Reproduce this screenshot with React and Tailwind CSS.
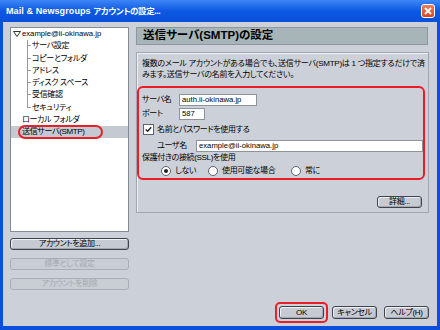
import React from "react";

const treeItems = [
  { label: "サーバ設定" },
  { label: "コピーとフォルダ" },
  { label: "アドレス" },
  { label: "ディスク スペース" },
  { label: "受信確認" },
  { label: "セキュリティ", last: true },
];

function TreeLine({ last }) {
  return (
    <div className="ml-[16px] w-[4px] h-full flex flex-col">
      <div className="h-1/2 border-l border-b border-[#9a9a9a]" />
      <div className={last ? "h-1/2" : "h-1/2 border-l border-[#9a9a9a]"} />
    </div>
  );
}

function Btn({ children, disabled, className = "" }) {
  return (
    <div
      className={
        "h-[12px] flex items-center justify-center rounded-[3px] border leading-none " +
        (disabled
          ? "border-[#a9adb5] text-[#a4a8b0] bg-[#c9cdd4] "
          : "border-[#3f434b] text-black bg-[#c6cad2] shadow-[inset_1px_1px_0_#eef0f3,inset_-1px_-1px_0_#a3a7af] ") +
        className
      }
    >
      {children}
    </div>
  );
}

function Input({ value, className = "" }) {
  return (
    <div
      className={
        "h-[12px] bg-white border border-[#8e939b] flex items-center pl-[2px] text-[7.7px] leading-none tracking-normal " +
        className
      }
    >
      {value}
    </div>
  );
}

function Radio({ checked, label }) {
  return (
    <div className="flex items-center gap-[4px]">
      <div className="w-[10px] h-[10px] shrink-0 rounded-full bg-white border border-[#5e636b] flex items-center justify-center">
        {checked && <div className="w-[4px] h-[4px] rounded-full bg-[#222]" />}
      </div>
      <span>{label}</span>
    </div>
  );
}

export default function App() {
  return (
    <div className="w-[440px] h-[330px] flex flex-col bg-[#0b4fdb] overflow-hidden text-black text-[8px] leading-none tracking-[-0.35px] font-['Liberation_Sans','Noto_Sans_CJK_JP',sans-serif] [font-feature-settings:'palt']">
      {/* title bar */}
      <div className="h-[22px] shrink-0 flex items-center pl-[6px] pr-[5px] bg-gradient-to-b from-[#3d86f5] via-[#0c58e3] to-[#0a50d8]">
        <span className="text-white font-bold text-[9px] tracking-[0.1px]">
          Mail &amp; Newsgroups{" "}
          <span className="text-[8.5px] tracking-[-0.4px]">アカウントの設定...</span>
        </span>
        <div className="ml-auto w-[14px] h-[14px] rounded-[3px] border border-white bg-gradient-to-b from-[#ef7c58] to-[#d9451e] flex items-center justify-center">
          <svg width="8" height="8" viewBox="0 0 8 8">
            <path d="M1 1L7 7M7 1L1 7" stroke="white" strokeWidth="1.8" />
          </svg>
        </div>
      </div>

      {/* body */}
      <div className="flex-1 min-h-0 mx-[3px] mb-[4px] bg-[#ccd0d8] flex gap-[7px] pt-[5px] pl-[7px] pr-[8px] pb-[3px]">
        {/* left pane */}
        <div className="w-[119px] shrink-0 flex flex-col">
          <div className="h-[205px] bg-white border border-[#878b93] flex flex-col">
            <div className="h-[12.25px] flex items-center pl-[2px]">
              <svg width="8" height="6" viewBox="0 0 8 6" className="mr-[1px]">
                <path d="M0.5 0.5H7.5L4 5.5Z" fill="none" stroke="#333" strokeWidth="1" />
              </svg>
              <span className="text-[7.7px] tracking-normal">example@ii-okinawa.jp</span>
            </div>
            {treeItems.map((it) => (
              <div key={it.label} className="h-[12.25px] flex items-center">
                <TreeLine last={it.last} />
                <span className="pl-[1px]">{it.label}</span>
              </div>
            ))}
            <div className="h-[12.25px] flex items-center pl-[11px]">ローカル フォルダ</div>
            <div className="h-[12.25px] flex items-center bg-[#c5c9d1] pl-[7px]">
              <span className="h-[14px] flex items-center border-2 border-[#e8202a] rounded-[7px] px-[2px] w-[85px]">
                送信サーバ(SMTP)
              </span>
            </div>
          </div>
          <div className="mt-[6px] flex flex-col gap-[8px]">
            <Btn>アカウントを追加...</Btn>
            <Btn disabled>標準として設定</Btn>
            <Btn disabled>アカウントを削除</Btn>
          </div>
        </div>

        {/* right pane */}
        <div className="w-[293px] shrink-0 min-w-0 flex flex-col">
          <div className="h-[18px] mr-[1px] bg-[#a7b4b8] border border-[#8c989c] flex items-center pl-[6px] font-bold text-[11.5px] tracking-normal">
            送信サーバ(SMTP)の設定
          </div>

          <div className="mt-[7px] h-[161px] border border-[#a2a6ae] shadow-[inset_1px_1px_0_#eef0f3] flex flex-col pt-[5px]">
            <div className="pl-[5px] leading-[11px] whitespace-nowrap overflow-hidden tracking-[-0.25px]">
              <div>複数のメール アカウントがある場合でも、送信サーバ(SMTP)は 1 つ指定するだけで済</div>
              <div>みます。送信サーバの名前を入力してください。</div>
            </div>

            <div className="mt-[6px] mr-[3px] h-[94px] border-2 border-[#ec1c24] rounded-[6px] pl-[3px] pt-[6px] flex flex-col">
              <div className="flex items-center h-[12px]">
                <span className="w-[37px] shrink-0">サーバ名</span>
                <Input value="auth.ii-okinawa.jp" className="w-[78px]" />
              </div>
              <div className="flex items-center h-[12px] mt-[2px]">
                <span className="w-[37px] shrink-0">ポート</span>
                <Input value="587" className="w-[26px]" />
              </div>
              <div className="flex items-center h-[11px] mt-[4px] ml-[1px]">
                <div className="w-[11px] h-[11px] bg-white border border-[#5e636b] flex items-center justify-center">
                  <svg width="7" height="7" viewBox="0 0 7 7">
                    <path d="M0.8 3.4L2.7 5.3L6.2 1.2" fill="none" stroke="#222" strokeWidth="1.4" />
                  </svg>
                </div>
                <span className="ml-[3px]">名前とパスワードを使用する</span>
              </div>
              <div className="flex items-center h-[12px] mt-[5px] pl-[15px]">
                <span className="w-[39px] shrink-0">ユーザ名</span>
                <Input value="example@ii-okinawa.jp" className="w-[227px]" />
              </div>
              <div className="h-[12px] flex items-center">保護付きの接続(SSL)を使用</div>
              <div className="h-[13px] flex items-center pl-[19px]">
                <div className="w-[47px] shrink-0">
                  <Radio checked label="しない" />
                </div>
                <div className="w-[83px] shrink-0">
                  <Radio label="使用可能な場合" />
                </div>
                <Radio label="常に" />
              </div>
            </div>

            <div className="mt-[16px] self-end mr-[6px]">
              <Btn className="w-[45px]">詳細...</Btn>
            </div>
          </div>

          <div className="mt-auto flex items-center justify-end gap-[4px]">
            <div className="border-2 border-[#e8202a] rounded-[5px] p-[2px]">
              <Btn className="w-[45px] h-[13px] border-[#1f2227]">OK</Btn>
            </div>
            <Btn className="w-[45px] h-[13px]">キャンセル</Btn>
            <Btn className="w-[45px] h-[13px] ml-[3px]">ヘルプ(H)</Btn>
          </div>
        </div>
      </div>
    </div>
  );
}
